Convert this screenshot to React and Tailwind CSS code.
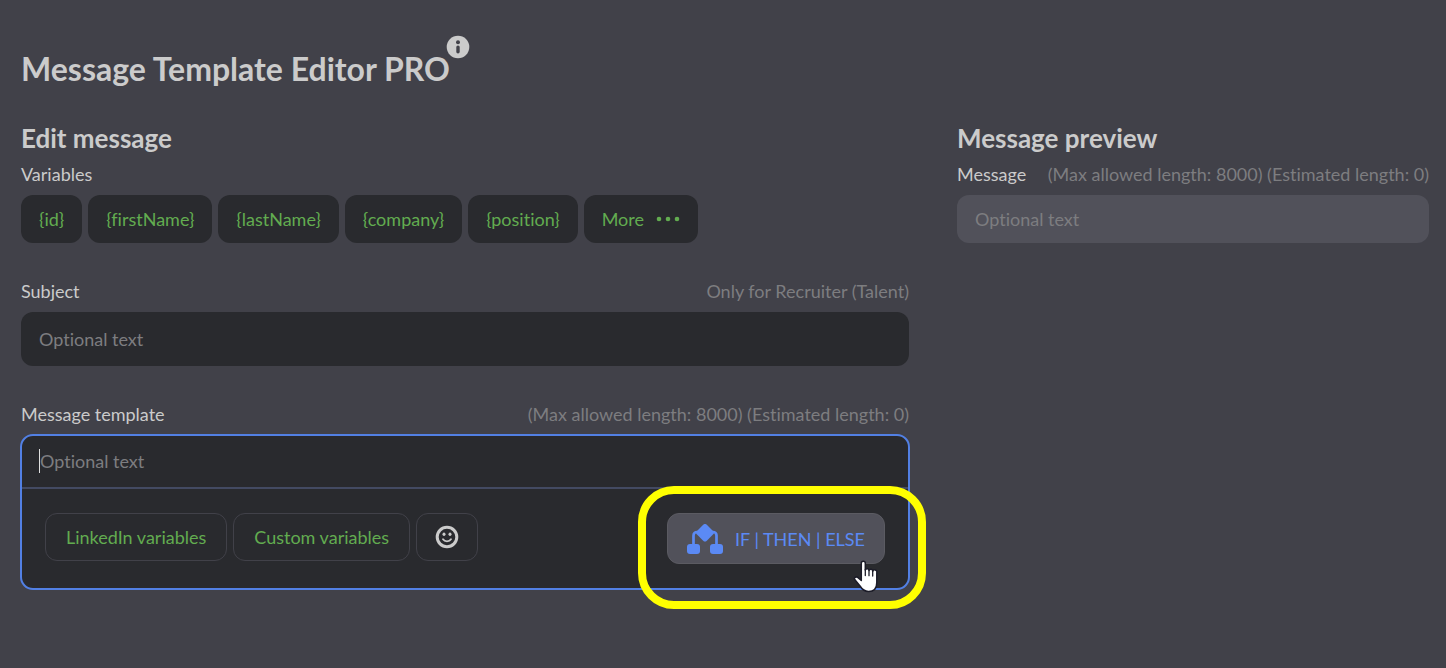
import React from "react";

const variables = ["{id}", "{firstName}", "{lastName}", "{company}", "{position}"];

const limits = "(Max allowed length: 8000) (Estimated length: 0)";

function InfoIcon() {
  return (
    <svg viewBox="0 0 24 24" className="size-6" aria-hidden="true">
      <circle cx="12" cy="12" r="11.3" fill="#cbcbcb" />
      <circle cx="12" cy="7.2" r="2" fill="#414149" />
      <rect x="10.3" y="10.4" width="3.4" height="8" rx="1.7" fill="#414149" />
    </svg>
  );
}

function DotsIcon() {
  return (
    <svg viewBox="0 0 24 6" className="h-[6px] w-6" fill="#62ac50" aria-hidden="true">
      <circle cx="3" cy="3" r="2.3" />
      <circle cx="12" cy="3" r="2.3" />
      <circle cx="21" cy="3" r="2.3" />
    </svg>
  );
}

function SmileIcon() {
  return (
    <svg viewBox="0 0 24 24" className="size-6" fill="none" aria-hidden="true">
      <circle cx="12" cy="12" r="9.8" stroke="#cbcbcb" strokeWidth="3" />
      <ellipse cx="9" cy="9.3" rx="1.5" ry="1.8" fill="#cbcbcb" />
      <ellipse cx="15" cy="9.3" rx="1.5" ry="1.8" fill="#cbcbcb" />
      <path d="M8 14.3c1.8 2.7 6.2 2.7 8 0" stroke="#cbcbcb" strokeWidth="1.8" strokeLinecap="round" />
    </svg>
  );
}

function BranchIcon() {
  return (
    <svg viewBox="0 0 36 30" className="h-[30px] w-9" fill="#5b8af5" aria-hidden="true">
      <path d="M6.5 21V11.500a3.500 3.500 0 0 1 3.500-3.500H26a3.500 3.500 0 0 1 3.500 3.500V21" fill="none" stroke="#5b8af5" strokeWidth="2.700" />
      <path d="M16.200.8a2.600 2.600 0 0 1 3.600 0L26 6.900a2.600 2.600 0 0 1 0 3.700l-6.200 6.100a2.600 2.600 0 0 1-3.600 0L10 10.600a2.600 2.600 0 0 1 0-3.700z" />
      <rect x="0" y="20" width="13" height="10" rx="3" />
      <rect x="23" y="20" width="13" height="10" rx="3" />
    </svg>
  );
}

function HandPointer() {
  return (
    <svg viewBox="0 0 26 33" className="pointer-events-none absolute right-[6px] top-[47px] h-[33px] w-[26px]" aria-hidden="true">
      <path
        d="M8.300 3.200a2 2 0 0 1 4 0V10a1.900 1.900 0 0 1 3.700.6 1.900 1.900 0 0 1 3.700.8 1.900 1.900 0 0 1 4.100 1.200V22.500c0 5.500-3 9-8.300 9-4.500 0-6.500-2.300-8.500-5.500L1.700 19.600c-1-1.900 1.300-3.500 3-2.200l3.600 3.100z"
        fill="#fff"
        stroke="#1c1c28"
        strokeWidth="1.500"
        strokeLinejoin="round"
      />
      <path d="M12.300 9.500v6M16 10.500v5.200M19.700 11.500v4.500" fill="none" stroke="#1c1c28" strokeWidth="1.300" strokeLinecap="round" />
    </svg>
  );
}

export default function App() {
  return (
    <main className="min-h-screen bg-[#414149] pl-[21px] pr-[17px] pt-[48px] pb-16 font-['Lato',sans-serif] text-[18px] leading-6 text-[#cbcbcb] [font-variant-ligatures:none]">
      <div className="flex items-start">
        <h1 className="text-[32px] leading-[42px] font-bold">Message Template Editor PRO</h1>
        <button type="button" aria-label="Editor information" className="-mt-[13px] -ml-1">
          <InfoIcon />
        </button>
      </div>

      <div className="mt-[30px] flex items-start gap-12">
        <section className="min-w-0 flex-1">
          <h2 className="text-[26px] leading-9 font-bold">Edit message</h2>
          <p className="mt-[6px]">Variables</p>
          <div className="mt-[9px] flex flex-wrap gap-[6px]">
            {variables.map((name) => (
              <button key={name} type="button" className="h-12 rounded-xl bg-[#292a2e] px-[18px] text-[#62ac50]">
                {name}
              </button>
            ))}
            <button type="button" className="flex h-12 items-center gap-3 rounded-xl bg-[#292a2e] px-[18px] text-[#62ac50]">
              More
              <DotsIcon />
            </button>
          </div>

          <div className="mt-9 flex justify-between">
            <label htmlFor="subject">Subject</label>
            <span className="text-[#7d7d80]">Only for Recruiter (Talent)</span>
          </div>
          <input
            id="subject"
            type="text"
            placeholder="Optional text"
            className="mt-[9px] block h-[54px] w-full rounded-xl bg-[#292a2e] px-[18px] outline-none placeholder:text-[#7d7d80]"
          />

          <div className="mt-9 flex justify-between">
            <label htmlFor="template">Message template</label>
            <span className="text-[#7d7d80]">{limits}</span>
          </div>
          <div className="mt-[9px] rounded-xl bg-[#292a2e] outline-2 -outline-offset-1 outline-[#5280e4]">
            <div className="flex h-[54px] items-center border-b-2 border-[#434a62] pl-[18px]">
              <span className="h-6 w-px bg-[#e0e0e0]" aria-hidden="true" />
              <textarea
                id="template"
                rows={1}
                placeholder="Optional text"
                className="block h-6 min-w-0 flex-1 resize-none overflow-hidden bg-transparent outline-none placeholder:text-[#7d7d80]"
              />
            </div>
            <div className="flex items-start gap-[6px] px-6 pt-6 pb-[25px]">
              <button type="button" className="h-12 rounded-xl border border-[#414149] px-5 text-[#62ac50]">
                LinkedIn variables
              </button>
              <button type="button" className="h-12 rounded-xl border border-[#414149] px-5 text-[#62ac50]">
                Custom variables
              </button>
              <button type="button" aria-label="Insert emoji" className="h-12 rounded-xl border border-[#414149] px-[18px]">
                <SmileIcon />
              </button>
              <div className="relative ml-auto">
                <button
                  type="button"
                  className="flex h-[51px] items-center gap-3 rounded-xl border border-[#5b5b62] bg-[#51515a] px-[19px] text-[#5b8af5]"
                >
                  <BranchIcon />
                  IF | THEN | ELSE
                </button>
                <span
                  className="pointer-events-none absolute -top-[27px] -right-[41px] -bottom-[45px] -left-[29px] rounded-[36px] border-8 border-[#ffff00]"
                  aria-hidden="true"
                />
                <HandPointer />
              </div>
            </div>
          </div>
        </section>

        <section className="w-[472px]">
          <h2 className="text-[26px] leading-9 font-bold">Message preview</h2>
          <div className="mt-[6px] flex justify-between whitespace-nowrap">
            <label htmlFor="preview">Message</label>
            <span className="text-[#7d7d80]">{limits}</span>
          </div>
          <input
            id="preview"
            type="text"
            readOnly
            placeholder="Optional text"
            className="mt-[9px] block h-12 w-full rounded-xl bg-[#51515a] px-[18px] outline-none placeholder:text-[#7d7d80]"
          />
        </section>
      </div>
    </main>
  );
}
